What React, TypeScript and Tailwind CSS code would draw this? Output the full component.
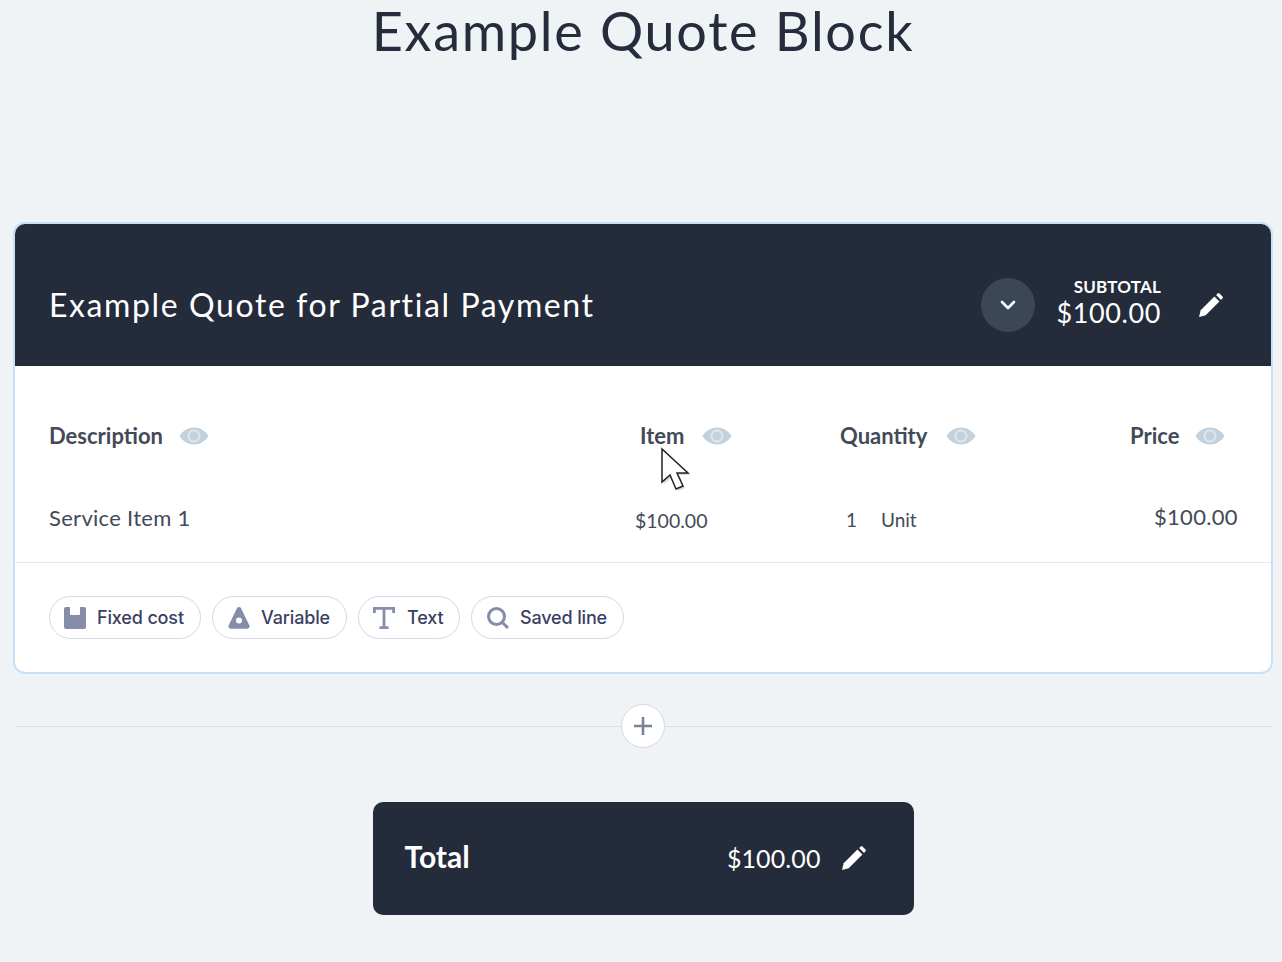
import React from 'react';

function Eye() {
  return (
    <svg width="30" height="20" viewBox="0 0 30 20" className="shrink-0">
      <path d="M0.5 10C4 4.5 9 1.5 15 1.5S26 4.5 29.5 10C26 15.5 21 18.5 15 18.5S4 15.5 0.5 10Z" fill="#c3d1dc" />
      <circle cx="15" cy="10" r="6.5" fill="#dfe7ed" />
      <circle cx="15" cy="10" r="4.5" fill="#c3d1dc" />
    </svg>
  );
}

function Pencil({ size }: { size: number }) {
  return (
    <svg width={size} height={size} viewBox="0 0 24 24" fill="white" className="shrink-0">
      <path d="M1 23l1.6-6.4L15.8 3.4l4.8 4.8L7.4 21.4 1 23z" />
      <path d="M17.4 1.8l1.5-1.3a1.2 1.2 0 0 1 1.7 0l2.9 2.9a1.2 1.2 0 0 1 0 1.7l-1.4 1.5-4.7-4.8z" />
    </svg>
  );
}

function Chip({ icon, label, className }: { icon: React.ReactNode; label: string; className: string }) {
  return (
    <div className={`flex h-[43px] items-center rounded-full border border-[#d5d7e3] bg-white font-['Inter',sans-serif] text-[18px] font-medium tracking-[-0.15px] text-[#3a3f63] ${className}`}>
      {icon}
      <span>{label}</span>
    </div>
  );
}

export default function App() {
  return (
    <div className="h-[962px] overflow-hidden bg-[#f0f3f6] pl-[13px] pr-[9px] font-['Lato',sans-serif]">
      <h1 className="h-[222px] text-center text-[54px] leading-[62px] tracking-[1.7px] text-[#252c3c]">
        Example Quote Block
      </h1>

      <div className="overflow-hidden rounded-[12px] border-[2px] border-[#c8e0f5] bg-white">
        <div className="flex h-[142px] items-center bg-[#242b3a] pl-[34px] pr-[48px] pt-[20px]">
          <span className="flex-1 text-[32px] tracking-[1.6px] text-white">Example Quote for Partial Payment</span>
          <div className="mr-[21px] flex h-[54px] w-[54px] items-center justify-center rounded-full bg-[#3b4656]">
            <svg width="16" height="10" viewBox="0 0 16 10" fill="none" stroke="white" strokeWidth="2.6" strokeLinecap="round" strokeLinejoin="round">
              <path d="M2 2l6 6 6-6" />
            </svg>
          </div>
          <div className="mb-[4px] mr-[37px] flex flex-col items-end text-white">
            <span className="text-[17px] font-bold leading-[20px] tracking-[0.2px]">SUBTOTAL</span>
            <span className="text-[27px] leading-[32px] tracking-[0.6px]">$100.00</span>
          </div>
          <Pencil size={25} />
        </div>

        <div className="h-[197px] border-b border-[#e4e7ec]">
          <div className="flex items-center pl-[34px] pt-[53px] text-[22px] font-bold text-[#434a57]">
            <div className="flex w-[591px] items-center gap-[16px]"><span>Description</span><Eye /></div>
            <div className="flex w-[200px] items-center gap-[18px]"><span>Item</span><Eye /></div>
            <div className="flex w-[290px] items-center gap-[19px]"><span>Quantity</span><Eye /></div>
            <div className="flex items-center gap-[16px]"><span>Price</span><Eye /></div>
          </div>
          <div className="mt-[51px] flex h-[28px] items-center pl-[34px] text-[#434a57]">
            <span className="w-[586px] text-[22px] tracking-[0.3px]">Service Item 1</span>
            <span className="mt-[7px] w-[211px] text-[19.5px]">$100.00</span>
            <span className="mt-[7px] w-[35px] text-[19px]">1</span>
            <span className="mt-[7px] w-[273px] text-[19px]">Unit</span>
            <span className="mb-[2px] text-[22px] tracking-[0.3px]">$100.00</span>
          </div>
        </div>

        <div className="flex h-[109px] items-start gap-[11px] pl-[34px] pt-[33px]">
          <Chip
            className="w-[152px] pl-[14px]"
            label="Fixed cost"
            icon={
              <svg width="22" height="22" viewBox="0 0 22 22" className="mr-[11px]">
                <path d="M2 0h4v7a1 1 0 0 0 1 1h8a1 1 0 0 0 1-1V0h4a2 2 0 0 1 2 2v18a2 2 0 0 1-2 2H2a2 2 0 0 1-2-2V2a2 2 0 0 1 2-2z" fill="#858da9" />
              </svg>
            }
          />
          <Chip
            className="w-[135px] pl-[15px]"
            label="Variable"
            icon={
              <svg width="22" height="22" viewBox="0 0 22 22" className="mr-[11px]">
                <path d="M8.8 1.4a2.5 2.5 0 0 1 4.4 0l8.2 17a2.3 2.3 0 0 1-2 3.3H2.6a2.3 2.3 0 0 1-2-3.3l8.2-17z" fill="#858da9" />
                <circle cx="11" cy="13.5" r="3" fill="white" />
              </svg>
            }
          />
          <Chip
            className="w-[102px] pl-[14px]"
            label="Text"
            icon={
              <svg width="22" height="22" viewBox="0 0 22 22" fill="none" stroke="#858da9" strokeWidth="2.8" className="mr-[12px]">
                <path d="M1.4 6V1.4h19.2V6M11 1.4V21M6.5 20.6h9" />
              </svg>
            }
          />
          <Chip
            className="w-[153px] pl-[15px]"
            label="Saved line"
            icon={
              <svg width="22" height="22" viewBox="0 0 22 22" fill="none" stroke="#858da9" strokeWidth="3" className="mr-[11px]">
                <circle cx="9.5" cy="9.5" r="8" />
                <path d="M15 15l6 6" />
              </svg>
            }
          />
        </div>
      </div>

      <div className="mt-[30px] flex h-[44px] items-center px-[2px]">
        <div className="h-px flex-1 bg-[#d9dde5]" />
        <div className="flex h-[44px] w-[44px] items-center justify-center rounded-full border border-[#d5d7e3] bg-white">
          <svg width="20" height="20" viewBox="0 0 20 20" stroke="#7c8199" strokeWidth="2.6">
            <path d="M10 1v18M1 10h18" />
          </svg>
        </div>
        <div className="h-px flex-1 bg-[#d9dde5]" />
      </div>

      <div className="mx-auto mt-[54px] flex h-[113px] w-[541px] items-center rounded-[10px] bg-[#242b3a] pl-[32px] pr-[48px] text-white">
        <span className="mb-[4px] flex-1 text-[30px] font-bold">Total</span>
        <span className="mr-[20px] text-[25px] tracking-[0.1px]">$100.00</span>
        <Pencil size={25} />
      </div>

      <svg width="34" height="48" viewBox="0 0 34 48" className="absolute left-[659px] top-[447px]">
        <path d="M3 2v33l8-7 6 14 7-3-6-13h11L3 2z" fill="#bdbdbd" opacity="0.6" transform="translate(2 2)" />
        <path d="M3 2v33l8-7 6 14 7-3-6-13h11L3 2z" fill="white" stroke="#222" strokeWidth="1.5" />
      </svg>
    </div>
  );
}
